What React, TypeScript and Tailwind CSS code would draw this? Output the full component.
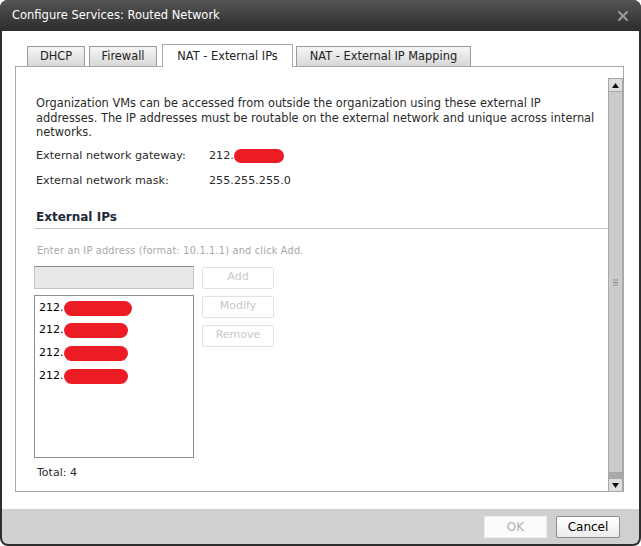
import React from "react";

const font = { fontFamily: '"DejaVu Sans", Verdana, sans-serif' };

function Redact({ w, h = 14 }: { w: number; h?: number }) {
  return (
    <span
      className="inline-block rounded-full bg-[#ec1c24] align-middle"
      style={{ width: w, height: h }}
    />
  );
}

function Tab({ label, w, active, ml }: { label: string; w: number; active?: boolean; ml: number }) {
  return (
    <div
      className={
        active
          ? "relative z-10 flex h-[23px] items-center justify-center border border-b-0 border-[#a8a8a8] bg-white pt-[2px] text-[11.4px] text-[#222]"
          : "flex h-[21px] items-center justify-center border border-b-0 border-[#9a9a9a] bg-gradient-to-b from-[#f6f6f6] to-[#d6d6d6] text-[11.4px] text-[#222]"
      }
      style={{ width: w, marginLeft: ml }}
    >
      {label}
    </div>
  );
}

function DisabledButton({ label }: { label: string }) {
  return (
    <div className="flex h-[22px] w-[72px] items-center justify-center rounded-[2px] border border-[#e2e2e2] bg-white text-[11px] text-[#c8c8c8]">
      {label}
    </div>
  );
}

export default function App() {
  return (
    <div className="h-[546px] w-[641px] bg-white" style={font}>
      <div className="flex h-[546px] w-[641px] flex-col overflow-hidden rounded-[8px] bg-[#2e2e2e]">
        {/* Title bar */}
        <div className="flex h-[31px] shrink-0 items-center justify-between bg-gradient-to-b from-[#555555] to-[#2c2c2c] pl-[12px] pr-[12px]">
          <span className="text-[11.5px] text-white">Configure Services: Routed Network</span>
          <svg width="10" height="10" viewBox="0 0 10 10" className="mr-[1px]">
            <path d="M1 1 L9 9 M9 1 L1 9" stroke="#9b9b9b" strokeWidth="2" strokeLinecap="square" />
          </svg>
        </div>

        {/* Body */}
        <div className="mx-[2px] flex flex-1 flex-col bg-white pl-[13px] pr-[15px] pt-[13px]">
          {/* Tabs */}
          <div className="-mb-px flex items-end">
            <Tab label="DHCP" w={58} ml={12} />
            <Tab label="Firewall" w={68} ml={4} />
            <Tab label="NAT - External IPs" w={131} ml={5} active />
            <Tab label="NAT - External IP Mapping" w={175} ml={3} />
          </div>

          {/* Panel */}
          <div className="flex h-[426px] border border-[#a8a8a8] pt-[11px]">
            <div className="flex flex-1 flex-col text-[11px] text-[#2b2b2b]">
              <p className="ml-[20px] mr-[10px] mt-[18px] whitespace-nowrap text-[11.4px] leading-[14.5px]">
                Organization VMs can be accessed from outside the organization using these external IP
                <br />
                addresses. The IP addresses must be routable on the external network and unique across internal
                <br />
                networks.
              </p>
              <div className="ml-[20px] mt-[9px] flex h-[14px] items-center text-[11.2px] leading-[14px]">
                <span className="w-[173px]">External network gateway:</span>
                <span>212.</span>
                <Redact w={50} />
              </div>
              <div className="ml-[20px] mt-[11px] flex h-[14px] items-center text-[11.2px] leading-[14px]">
                <span className="w-[173px]">External network mask:</span>
                <span>255.255.255.0</span>
              </div>
              <div className="ml-[18px] mt-[22px] border-b border-[#c8c8c8] pb-[3px] pl-[2px] text-[12px] font-bold leading-[15px] text-[#1c2a38]">
                External IPs
              </div>
              <div className="ml-[21px] mt-[16px] text-[9.75px] leading-[12px] tracking-[0.2px] text-[#a8a8a8]">
                Enter an IP address (format: 10.1.1.1) and click Add.
              </div>
              <div className="ml-[18px] mt-[9px] flex gap-[8px]">
                <div className="flex flex-col gap-[6px]">
                  <div className="h-[23px] w-[160px] border border-[#c4c4c4] border-t-[#8a8a8a] bg-[#e8e8e8]" />
                  <div className="flex h-[163px] w-[160px] flex-col border border-[#8e8e8e] bg-white pl-[4px] pt-[6px] text-[11px] text-black">
                    <div className="flex h-[14px] items-center">
                      <span>212.</span>
                      <Redact w={68} h={15} />
                    </div>
                    <div className="mt-[8px] flex h-[14px] items-center">
                      <span>212.</span>
                      <Redact w={64} h={15} />
                    </div>
                    <div className="mt-[9px] flex h-[14px] items-center">
                      <span>212.</span>
                      <Redact w={64} h={15} />
                    </div>
                    <div className="mt-[9px] flex h-[14px] items-center">
                      <span>212.</span>
                      <Redact w={64} h={15} />
                    </div>
                  </div>
                </div>
                <div className="flex flex-col gap-[7px] pt-[1px]">
                  <DisabledButton label="Add" />
                  <DisabledButton label="Modify" />
                  <DisabledButton label="Remove" />
                </div>
              </div>
              <div className="ml-[21px] mt-[8px] leading-[14px]">Total: 4</div>
            </div>

            {/* Scrollbar */}
            <div className="flex w-[15px] flex-col">
              <div className="flex h-[14px] items-center justify-center border border-[#a8a8a8] bg-[#dedede]">
                <svg width="7" height="5" viewBox="0 0 7 5">
                  <path d="M0 5 L3.5 0 L7 5 Z" fill="#111" />
                </svg>
              </div>
              <div className="flex flex-1 items-center justify-center border-x border-[#a8a8a8] bg-[#cbcbcb]">
                <svg width="5" height="7" viewBox="0 0 5 7">
                  <path d="M0 1 H5 M0 3.5 H5 M0 6 H5" stroke="#8a8a8a" strokeWidth="1" />
                </svg>
              </div>
              <div className="h-[6px] border-x border-[#a8a8a8] bg-[#a9a9a9]" />
              <div className="flex h-[13px] items-center justify-center border border-b-0 border-[#a8a8a8] bg-[#dedede]">
                <svg width="7" height="5" viewBox="0 0 7 5">
                  <path d="M0 0 L7 0 L3.5 5 Z" fill="#111" />
                </svg>
              </div>
            </div>
          </div>
        </div>

        {/* Footer */}
        <div className="mx-[2px] mb-[2px] flex h-[35px] shrink-0 items-center justify-end gap-[9px] rounded-b-[6px] bg-[#d0d0d0] pr-[19px] pt-[1px]">
          <div className="flex h-[22px] w-[63px] items-center justify-center border border-[#ececec] bg-[#fbfbfb] text-[12px] text-[#b0b0b0]">
            OK
          </div>
          <div className="flex h-[22px] w-[64px] items-center justify-center rounded-[2px] border border-[#8c8c8c] bg-gradient-to-b from-white to-[#ececec] text-[12px] text-black">
            Cancel
          </div>
        </div>
      </div>
    </div>
  );
}
